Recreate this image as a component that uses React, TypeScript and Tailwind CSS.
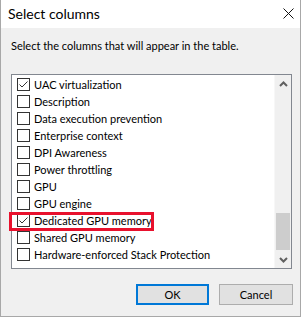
const columns = [
  { label: 'UAC virtualization', checked: true },
  { label: 'Description', checked: false },
  { label: 'Data execution prevention', checked: false },
  { label: 'Enterprise context', checked: false },
  { label: 'DPI Awareness', checked: false },
  { label: 'Power throttling', checked: false },
  { label: 'GPU', checked: false },
  { label: 'GPU engine', checked: false },
  { label: 'Dedicated GPU memory', checked: true },
  { label: 'Shared GPU memory', checked: false },
  { label: 'Hardware-enforced Stack Protection', checked: false },
];

function CheckBox({ checked }: { checked: boolean }) {
  return (
    <span className="flex h-[13px] w-[13px] shrink-0 items-center justify-center border border-[#333333] bg-white">
      {checked && (
        <svg width="11" height="11" viewBox="0 0 11 11" fill="none">
          <path d="M1.5 5.5 L4 8 L9.5 2.5" stroke="#333333" strokeWidth="1" />
        </svg>
      )}
    </span>
  );
}

export default function App() {
  return (
    <div
      className="relative flex h-[317px] w-[301px] flex-col border-x border-b border-[#a8a8a8] bg-[#f0f0f0] text-[11px] text-black"
      style={{ fontFamily: 'Lato, "Liberation Sans", sans-serif' }}
    >
      {/* title bar */}
      <div className="flex h-[28px] shrink-0 items-center justify-between bg-white pl-[7px] pr-[6px]">
        <span className="text-[14px] leading-[16px]">Select columns</span>
        <svg width="11" height="11" viewBox="0 0 11 11" className="mb-[2px]">
          <path d="M0.5 0.5 L10.5 10.5 M10.5 0.5 L0.5 10.5" stroke="#111" strokeWidth="1" />
        </svg>
      </div>

      <p className="mt-[10px] pl-[10px] leading-[16px]">Select the columns that will appear in the table.</p>

      {/* list */}
      <div className="ml-[10px] mt-[20px] flex h-[195px] w-[281px] border border-[#828790] bg-white">
        <div className="flex flex-1 flex-col pt-[1px]">
          {columns.map((c) => (
            <div key={c.label} className="flex h-[17px] items-center gap-[4px] pl-[5px] leading-[16px]">
              <CheckBox checked={c.checked} />
              <span className="whitespace-nowrap">{c.label}</span>
            </div>
          ))}
        </div>
        <div className="flex w-[17px] flex-col border-l border-[#f7f7f7] bg-[#f0f0f0]">
          <div className="flex h-[17px] items-center justify-center">
            <svg width="9" height="6" viewBox="0 0 9 6">
              <path d="M1 5 L4.5 1.5 L8 5" stroke="#606060" strokeWidth="2" fill="none" />
            </svg>
          </div>
          <div className="flex-1 pt-[121px] px-[1px]">
            <div className="h-[37px] bg-[#cdcdcd]" />
          </div>
          <div className="flex h-[17px] items-center justify-center">
            <svg width="9" height="6" viewBox="0 0 9 6">
              <path d="M1 1 L4.5 4.5 L8 1" stroke="#606060" strokeWidth="2" fill="none" />
            </svg>
          </div>
        </div>
      </div>

      {/* buttons */}
      <div className="mt-[15px] flex justify-end gap-[10px] pr-[7px]">
        <button className="flex h-[21px] w-[73px] items-center justify-center border-2 border-[#0078d7] bg-[#e1e1e1] leading-[16px]">
          OK
        </button>
        <button className="flex h-[21px] w-[74px] items-center justify-center border border-[#adadad] bg-[#e1e1e1] leading-[16px]">
          Cancel
        </button>
      </div>

      {/* highlight */}
      <div className="pointer-events-none absolute left-[8px] top-[212px] h-[19px] w-[145px] border-[3px] border-[#e8112d]" />
    </div>
  );
}
